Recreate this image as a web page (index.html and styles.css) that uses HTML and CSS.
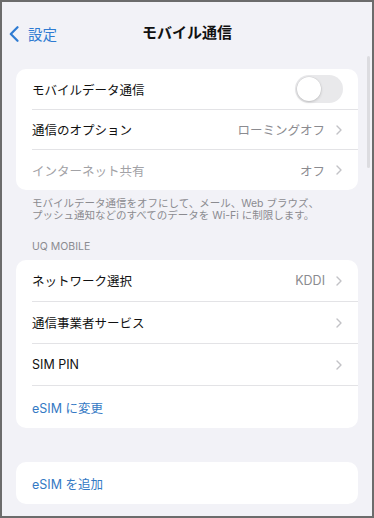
FILE: index.html
```html
<!DOCTYPE html>
<html lang="ja">
<head>
<meta charset="utf-8">
<title>モバイル通信</title>
<link rel="stylesheet" href="styles.css">
</head>
<body>
<div class="frame">
  <header class="nav">
    <a class="back">
      <svg class="back-icon" viewBox="0 0 10 16" width="10" height="16"><path d="M8.5 1.2 L1.8 8 L8.5 14.8" fill="none" stroke="currentColor" stroke-width="2.2" stroke-linecap="round" stroke-linejoin="round"/></svg>
      <span>設定</span>
    </a>
    <h1 class="title">モバイル通信</h1>
  </header>

  <section class="card first">
    <div class="row">
      <div class="row-inner">
        <span class="label">モバイルデータ通信</span>
        <span class="toggle"><span class="knob"></span></span>
      </div>
    </div>
    <div class="row">
      <div class="row-inner">
        <span class="label">通信のオプション</span>
        <span class="value">ローミングオフ<svg class="chev" viewBox="0 0 6 10" width="6" height="10"><path d="M1 1 L5 5 L1 9" fill="none" stroke="currentColor" stroke-width="1.4" stroke-linecap="round" stroke-linejoin="round"/></svg></span>
      </div>
    </div>
    <div class="row">
      <div class="row-inner">
        <span class="label disabled">インターネット共有</span>
        <span class="value">オフ<svg class="chev" viewBox="0 0 6 10" width="6" height="10"><path d="M1 1 L5 5 L1 9" fill="none" stroke="currentColor" stroke-width="1.4" stroke-linecap="round" stroke-linejoin="round"/></svg></span>
      </div>
    </div>
  </section>
  <p class="note">モバイルデータ通信をオフにして、メール、Web ブラウズ、<br>プッシュ通知などのすべてのデータを Wi-Fi に制限します。</p>

  <h2 class="section-title">UQ MOBILE</h2>
  <section class="card tall">
    <div class="row">
      <div class="row-inner">
        <span class="label">ネットワーク選択</span>
        <span class="value">KDDI<svg class="chev" viewBox="0 0 6 10" width="6" height="10"><path d="M1 1 L5 5 L1 9" fill="none" stroke="currentColor" stroke-width="1.4" stroke-linecap="round" stroke-linejoin="round"/></svg></span>
      </div>
    </div>
    <div class="row">
      <div class="row-inner">
        <span class="label">通信事業者サービス</span>
        <span class="value"><svg class="chev" viewBox="0 0 6 10" width="6" height="10"><path d="M1 1 L5 5 L1 9" fill="none" stroke="currentColor" stroke-width="1.4" stroke-linecap="round" stroke-linejoin="round"/></svg></span>
      </div>
    </div>
    <div class="row">
      <div class="row-inner">
        <span class="label">SIM PIN</span>
        <span class="value"><svg class="chev" viewBox="0 0 6 10" width="6" height="10"><path d="M1 1 L5 5 L1 9" fill="none" stroke="currentColor" stroke-width="1.4" stroke-linecap="round" stroke-linejoin="round"/></svg></span>
      </div>
    </div>
    <div class="row">
      <div class="row-inner">
        <span class="label link">eSIM に変更</span>
      </div>
    </div>
  </section>

  <section class="card tall last">
    <div class="row">
      <div class="row-inner">
        <span class="label link">eSIM を追加</span>
      </div>
    </div>
  </section>

  <div class="scrollbar"></div>
</div>
</body>
</html>
```

FILE: styles.css
```css
* { box-sizing: border-box; }
html, body { margin: 0; padding: 0; }
body {
  width: 374px;
  height: 518px;
  overflow: hidden;
  font-family: "Inter", "Noto Sans CJK JP", sans-serif;
  background: #f2f2f7;
}
.frame {
  position: relative;
  width: 374px;
  height: 518px;
  border: 2px solid #6c6c6c;
  background: #f2f2f7;
  overflow: hidden;
}
.nav {
  position: relative;
  height: 58px;
  display: flex;
  align-items: center;
  justify-content: center;
}
.back {
  position: absolute;
  left: 7px;
  top: 21px;
  display: flex;
  align-items: center;
  gap: 9px;
  color: #2f7bd2;
  font-size: 14.5px;
}
.back-icon { display: block; }
.title {
  margin: 0;
  font-size: 15px;
  font-weight: 700;
  color: #111;
  letter-spacing: 0;
}
.card {
  margin: 9px 14px 0;
  background: #fff;
  border-radius: 10px;
  overflow: hidden;
}
.row {
  padding-left: 16px;
}
.row-inner {
  height: 40px;
  display: flex;
  align-items: center;
  justify-content: space-between;
  padding-right: 16px;
  border-bottom: 1px solid #e3e3e6;
}
.row:last-child .row-inner { border-bottom: none; }
.tall .row-inner { height: 42px; }
.first .row:first-child .row-inner { height: 41px; }
.label {
  font-size: 12.5px;
  color: #111;
}
.label.disabled { color: #a2a2a6; }
.label.link { color: #3479c4; }
.value {
  display: flex;
  align-items: center;
  gap: 11px;
  font-size: 12.5px;
  color: #8b8b90;
}
.chev {
  display: block;
  color: #c2c2c6;
}
.toggle {
  position: relative;
  width: 48px;
  height: 28px;
  border-radius: 14px;
  background: #e9e9eb;
  margin-right: -1px;
}
.knob {
  position: absolute;
  left: 2px;
  top: 2px;
  width: 24px;
  height: 24px;
  border-radius: 50%;
  background: #fff;
  box-shadow: 0 1px 3px rgba(0,0,0,0.18), 0 0 0 0.5px rgba(0,0,0,0.06);
}
.note {
  margin: 8px 0 0;
  padding-left: 30px;
  padding-right: 16px;
  font-size: 10.5px;
  line-height: 11.5px;
  color: #8b8b90;
  white-space: nowrap;
}
.section-title {
  margin: 19px 0 0;
  padding-left: 30px;
  font-size: 10.5px;
  font-weight: 400;
  color: #8b8b90;
  line-height: 14px;
}
.section-title + .card { margin-top: 6px; }
.card.last { margin-top: 34px; }
.scrollbar {
  position: absolute;
  right: 2px;
  top: 54px;
  width: 3px;
  height: 112px;
  border-radius: 2px;
  background: #dcdce0;
}
```
